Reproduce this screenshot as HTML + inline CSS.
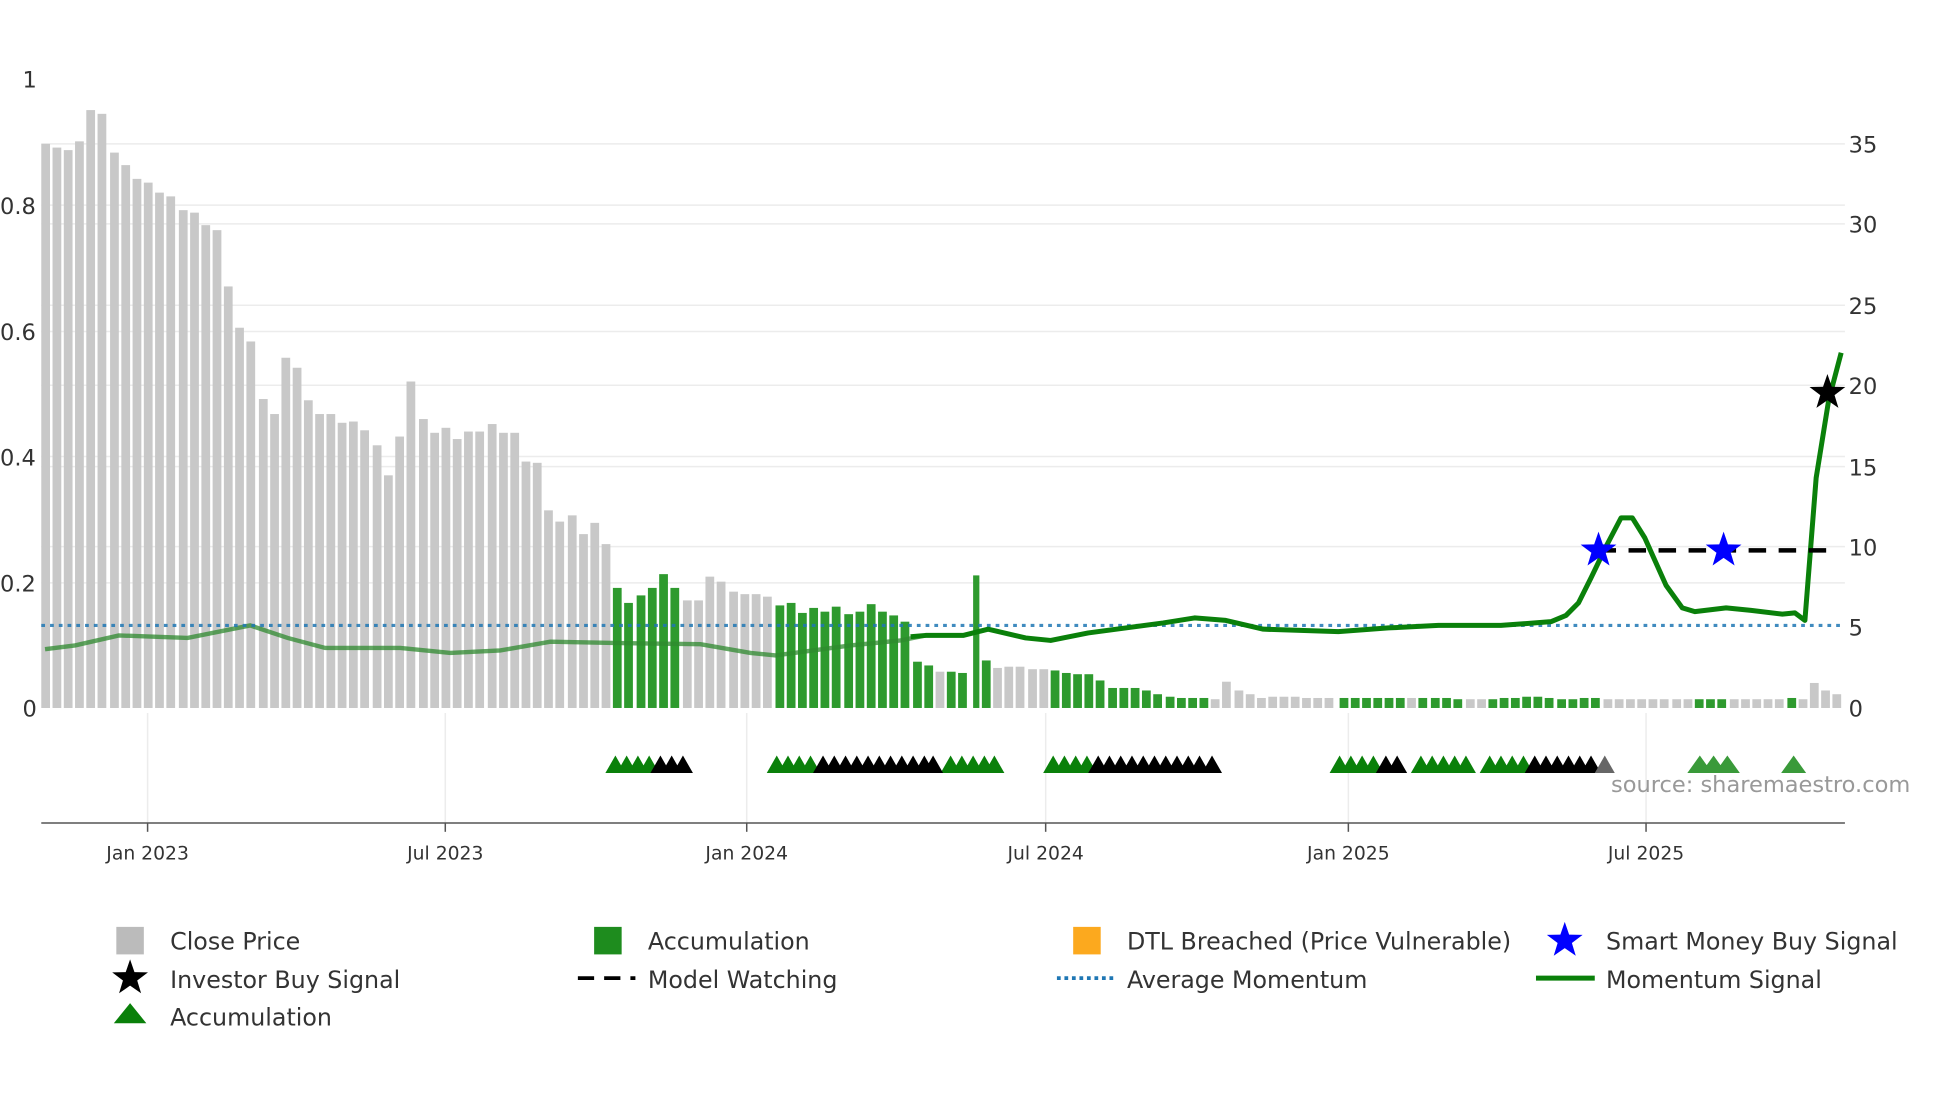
<!DOCTYPE html>
<html><head><meta charset="utf-8"><style>
html,body{margin:0;padding:0;background:#fff;}
svg{display:block;}
text{font-family:"DejaVu Sans","Liberation Sans",sans-serif;}
</style></head><body>
<svg width="1960" height="1102" viewBox="0 0 1567 881" preserveAspectRatio="none" xmlns="http://www.w3.org/2000/svg">
<rect width="1567" height="881" fill="#fff"/>
<g stroke="#ececec" stroke-width="1.2">
<line x1="33" y1="115" x2="1475" y2="115"/><line x1="33" y1="179" x2="1475" y2="179"/><line x1="33" y1="244" x2="1475" y2="244"/><line x1="33" y1="308" x2="1475" y2="308"/><line x1="33" y1="373" x2="1475" y2="373"/><line x1="33" y1="437" x2="1475" y2="437"/>
<line x1="33" y1="164" x2="1475" y2="164"/><line x1="33" y1="265" x2="1475" y2="265"/><line x1="33" y1="365" x2="1475" y2="365"/><line x1="33" y1="466" x2="1475" y2="466"/>
<line x1="118" y1="570" x2="118" y2="658"/><line x1="356" y1="570" x2="356" y2="658"/><line x1="597" y1="570" x2="597" y2="658"/><line x1="836" y1="570" x2="836" y2="658"/><line x1="1078" y1="570" x2="1078" y2="658"/><line x1="1316" y1="570" x2="1316" y2="658"/>
</g>
<g font-size="18" fill="#333">
<text x="18" y="70">1</text><text x="0" y="171">0.8</text><text x="0" y="272">0.6</text><text x="0" y="372">0.4</text><text x="0" y="473">0.2</text><text x="18" y="573">0</text>
<text x="1478" y="122">35</text><text x="1478" y="186">30</text><text x="1478" y="251">25</text><text x="1478" y="315">20</text><text x="1478" y="380">15</text><text x="1478" y="444">10</text><text x="1478" y="508">5</text><text x="1478" y="573">0</text>
</g>
<g fill="#c8c8c8">
<rect x="33" y="115" width="7" height="451"/><rect x="42" y="118" width="7" height="448"/><rect x="51" y="120" width="7" height="446"/><rect x="60" y="113" width="7" height="453"/><rect x="69" y="88" width="7" height="478"/><rect x="78" y="91" width="7" height="475"/><rect x="88" y="122" width="7" height="444"/><rect x="97" y="132" width="7" height="434"/><rect x="106" y="143" width="7" height="423"/><rect x="115" y="146" width="7" height="420"/><rect x="124" y="154" width="7" height="412"/><rect x="133" y="157" width="7" height="409"/><rect x="143" y="168" width="7" height="398"/><rect x="152" y="170" width="7" height="396"/><rect x="161" y="180" width="7" height="386"/><rect x="170" y="184" width="7" height="382"/><rect x="179" y="229" width="7" height="337"/><rect x="188" y="262" width="7" height="304"/><rect x="197" y="273" width="7" height="293"/><rect x="207" y="319" width="7" height="247"/><rect x="216" y="331" width="7" height="235"/><rect x="225" y="286" width="7" height="280"/><rect x="234" y="294" width="7" height="272"/><rect x="243" y="320" width="7" height="246"/><rect x="252" y="331" width="7" height="235"/><rect x="261" y="331" width="7" height="235"/><rect x="270" y="338" width="7" height="228"/><rect x="279" y="337" width="7" height="229"/><rect x="288" y="344" width="7" height="222"/><rect x="298" y="356" width="7" height="210"/><rect x="307" y="380" width="7" height="186"/><rect x="316" y="349" width="7" height="217"/><rect x="325" y="305" width="7" height="261"/><rect x="335" y="335" width="7" height="231"/><rect x="344" y="346" width="7" height="220"/><rect x="353" y="342" width="7" height="224"/><rect x="362" y="351" width="7" height="215"/><rect x="371" y="345" width="7" height="221"/><rect x="380" y="345" width="7" height="221"/><rect x="390" y="339" width="7" height="227"/><rect x="399" y="346" width="7" height="220"/><rect x="408" y="346" width="7" height="220"/><rect x="417" y="369" width="7" height="197"/><rect x="426" y="370" width="7" height="196"/><rect x="435" y="408" width="7" height="158"/><rect x="444" y="417" width="7" height="149"/><rect x="454" y="412" width="7" height="154"/><rect x="463" y="427" width="7" height="139"/><rect x="472" y="418" width="7" height="148"/><rect x="481" y="435" width="7" height="131"/>
<rect x="546" y="480" width="7" height="86"/><rect x="555" y="480" width="7" height="86"/><rect x="564" y="461" width="7" height="105"/><rect x="573" y="465" width="7" height="101"/><rect x="583" y="473" width="7" height="93"/><rect x="592" y="475" width="7" height="91"/><rect x="601" y="475" width="7" height="91"/><rect x="610" y="477" width="7" height="89"/>
<rect x="748" y="537" width="7" height="29"/>
<rect x="794" y="534" width="7" height="32"/><rect x="803" y="533" width="7" height="33"/><rect x="812" y="533" width="7" height="33"/><rect x="822" y="535" width="7" height="31"/><rect x="831" y="535" width="7" height="31"/>
<rect x="968" y="559" width="7" height="7"/><rect x="977" y="545" width="7" height="21"/><rect x="987" y="552" width="7" height="14"/><rect x="996" y="555" width="7" height="11"/><rect x="1005" y="558" width="7" height="8"/><rect x="1014" y="557" width="7" height="9"/><rect x="1023" y="557" width="7" height="9"/><rect x="1032" y="557" width="7" height="9"/><rect x="1041" y="558" width="7" height="8"/><rect x="1050" y="558" width="7" height="8"/><rect x="1059" y="558" width="7" height="8"/>
<rect x="1125" y="558" width="7" height="8"/><rect x="1172" y="559" width="7" height="7"/><rect x="1181" y="559" width="7" height="7"/>
<rect x="1282" y="559" width="7" height="7"/><rect x="1291" y="559" width="7" height="7"/><rect x="1300" y="559" width="7" height="7"/><rect x="1309" y="559" width="7" height="7"/><rect x="1318" y="559" width="7" height="7"/><rect x="1327" y="559" width="7" height="7"/><rect x="1337" y="559" width="7" height="7"/><rect x="1346" y="559" width="7" height="7"/>
<rect x="1383" y="559" width="7" height="7"/><rect x="1392" y="559" width="7" height="7"/><rect x="1401" y="559" width="7" height="7"/><rect x="1410" y="559" width="7" height="7"/><rect x="1419" y="559" width="7" height="7"/><rect x="1438" y="559" width="7" height="7"/><rect x="1447" y="546" width="7" height="20"/><rect x="1456" y="552" width="7" height="14"/><rect x="1465" y="555" width="7" height="11"/>
</g>
<g fill="#2e9a2e">
<rect x="490" y="470" width="7" height="96"/><rect x="499" y="482" width="7" height="84"/><rect x="509" y="476" width="7" height="90"/><rect x="518" y="470" width="7" height="96"/><rect x="527" y="459" width="7" height="107"/><rect x="536" y="470" width="7" height="96"/>
<rect x="620" y="484" width="7" height="82"/><rect x="629" y="482" width="7" height="84"/><rect x="638" y="490" width="7" height="76"/><rect x="647" y="486" width="7" height="80"/><rect x="656" y="489" width="7" height="77"/><rect x="665" y="485" width="7" height="81"/><rect x="675" y="491" width="7" height="75"/><rect x="684" y="489" width="7" height="77"/><rect x="693" y="483" width="7" height="83"/><rect x="702" y="489" width="7" height="77"/><rect x="711" y="492" width="7" height="74"/><rect x="720" y="497" width="7" height="69"/><rect x="730" y="529" width="7" height="37"/><rect x="739" y="532" width="7" height="34"/>
<rect x="757" y="537" width="7" height="29"/><rect x="766" y="538" width="7" height="28"/><rect x="778" y="460" width="5" height="106"/><rect x="785" y="528" width="7" height="38"/>
<rect x="840" y="536" width="7" height="30"/><rect x="849" y="538" width="7" height="28"/><rect x="858" y="539" width="7" height="27"/><rect x="867" y="539" width="7" height="27"/><rect x="876" y="544" width="7" height="22"/><rect x="886" y="550" width="7" height="16"/><rect x="895" y="550" width="7" height="16"/><rect x="904" y="550" width="7" height="16"/><rect x="913" y="552" width="7" height="14"/><rect x="922" y="555" width="7" height="11"/><rect x="932" y="557" width="7" height="9"/><rect x="941" y="558" width="7" height="8"/><rect x="950" y="558" width="7" height="8"/><rect x="959" y="558" width="7" height="8"/>
<rect x="1071" y="558" width="7" height="8"/><rect x="1080" y="558" width="7" height="8"/><rect x="1089" y="558" width="7" height="8"/><rect x="1098" y="558" width="7" height="8"/><rect x="1107" y="558" width="7" height="8"/><rect x="1116" y="558" width="7" height="8"/><rect x="1134" y="558" width="7" height="8"/><rect x="1144" y="558" width="7" height="8"/><rect x="1153" y="558" width="7" height="8"/><rect x="1162" y="559" width="7" height="7"/>
<rect x="1190" y="559" width="7" height="7"/><rect x="1199" y="558" width="7" height="8"/><rect x="1208" y="558" width="7" height="8"/><rect x="1217" y="557" width="7" height="9"/><rect x="1226" y="557" width="7" height="9"/><rect x="1235" y="558" width="7" height="8"/><rect x="1245" y="559" width="7" height="7"/><rect x="1254" y="559" width="7" height="7"/><rect x="1263" y="558" width="7" height="8"/><rect x="1272" y="558" width="7" height="8"/>
<rect x="1355" y="559" width="7" height="7"/><rect x="1364" y="559" width="7" height="7"/><rect x="1373" y="559" width="7" height="7"/><rect x="1429" y="558" width="7" height="8"/>
</g>
<path d="M36,519 L60,516 L95,508 L150,510 L200,500 L230,510 L260,518 L320,518 L360,522 L400,520 L440,513 L490,514 L560,515 L600,522 L620,524 L650,520 L680,516 L720,512 L740,508" fill="none" stroke="#2f8a2f" stroke-width="3.5" stroke-opacity="0.75"/>
<line x1="33" y1="500" x2="1472" y2="500" stroke="#1f77b4" stroke-width="2.5" stroke-dasharray="3,4" stroke-opacity="0.85"/>
<path d="M728,509 L740,508 L770,508 L790,503 L820,510 L840,512 L870,506 L900,502 L930,498 L955,494 L980,496 L1010,503 L1070,505 L1110,502 L1150,500 L1200,500 L1240,497 L1252,492 L1262,482 L1272,462 L1285,435 L1296,414 L1305,414 L1315,430 L1332,468 L1345,486 L1355,489 L1380,486 L1400,488 L1425,491 L1435,490 L1443,496 L1452,382 L1462,320 L1472,282" fill="none" stroke="#0a800a" stroke-width="4" stroke-linejoin="round"/>
<line x1="1278" y1="440" x2="1468" y2="440" stroke="#000" stroke-width="3.5" stroke-dasharray="14,10"/>
<path d="M0,-15 L3.5,-4.8 L14.3,-4.6 L5.7,1.9 L8.8,12.1 L0,6 L-8.8,12.1 L-5.7,1.9 L-14.3,-4.6 L-3.5,-4.8Z" fill="#0000ff" transform="translate(1278,440)"/>
<path d="M0,-15 L3.5,-4.8 L14.3,-4.6 L5.7,1.9 L8.8,12.1 L0,6 L-8.8,12.1 L-5.7,1.9 L-14.3,-4.6 L-3.5,-4.8Z" fill="#0000ff" transform="translate(1378,440)"/>
<path d="M0,-15 L3.5,-4.8 L14.3,-4.6 L5.7,1.9 L8.8,12.1 L0,6 L-8.8,12.1 L-5.7,1.9 L-14.3,-4.6 L-3.5,-4.8Z" fill="#000" transform="translate(1461,314)"/>
<g fill="#0a800a">
<path d="M484,618 l8,-14 l8,14z M493,618 l8,-14 l8,14z M502,618 l8,-14 l8,14z M511,618 l8,-14 l8,14z"/>
<path d="M613,618 l8,-14 l8,14z M622,618 l8,-14 l8,14z M631,618 l8,-14 l8,14z M640,618 l8,-14 l8,14z"/>
<path d="M752,618 l8,-14 l8,14z M761,618 l8,-14 l8,14z M770,618 l8,-14 l8,14z M779,618 l8,-14 l8,14z M787,618 l8,-14 l8,14z"/>
<path d="M834,618 l8,-14 l8,14z M843,618 l8,-14 l8,14z M852,618 l8,-14 l8,14z M861,618 l8,-14 l8,14z"/>
<path d="M1063,618 l8,-14 l8,14z M1072,618 l8,-14 l8,14z M1081,618 l8,-14 l8,14z M1090,618 l8,-14 l8,14z"/>
<path d="M1128,618 l8,-14 l8,14z M1137,618 l8,-14 l8,14z M1146,618 l8,-14 l8,14z M1155,618 l8,-14 l8,14z M1164,618 l8,-14 l8,14z"/>
<path d="M1183,618 l8,-14 l8,14z M1192,618 l8,-14 l8,14z M1201,618 l8,-14 l8,14z M1210,618 l8,-14 l8,14z"/>
</g>
<g fill="#3a9a3a">
<path d="M1349,618 l10,-14 l10,14z M1360,618 l10,-14 l10,14z M1371,618 l10,-14 l10,14z M1424,618 l10,-14 l10,14z"/>
</g>
<g fill="#000">
<path d="M520,618 l8,-14 l8,14z M529,618 l8,-14 l8,14z M538,618 l8,-14 l8,14z"/>
<path d="M650,618 l8,-14 l8,14z M659,618 l8,-14 l8,14z M668,618 l8,-14 l8,14z M677,618 l8,-14 l8,14z M686,618 l8,-14 l8,14z M695,618 l8,-14 l8,14z M704,618 l8,-14 l8,14z M713,618 l8,-14 l8,14z M722,618 l8,-14 l8,14z M731,618 l8,-14 l8,14z M738,618 l8,-14 l8,14z"/>
<path d="M870,618 l8,-14 l8,14z M879,618 l8,-14 l8,14z M888,618 l8,-14 l8,14z M897,618 l8,-14 l8,14z M906,618 l8,-14 l8,14z M915,618 l8,-14 l8,14z M924,618 l8,-14 l8,14z M933,618 l8,-14 l8,14z M942,618 l8,-14 l8,14z M951,618 l8,-14 l8,14z M961,618 l8,-14 l8,14z"/>
<path d="M1100,618 l8,-14 l8,14z M1109,618 l8,-14 l8,14z"/>
<path d="M1219,618 l8,-14 l8,14z M1228,618 l8,-14 l8,14z M1237,618 l8,-14 l8,14z M1246,618 l8,-14 l8,14z M1255,618 l8,-14 l8,14z M1264,618 l8,-14 l8,14z"/>
</g>
<path d="M1275,618 l8,-14 l8,14z" fill="#666"/>
<text x="1288" y="633" font-size="18" fill="#999">source: sharemaestro.com</text>
<line x1="33" y1="658" x2="1475" y2="658" stroke="#555" stroke-width="1.2"/>
<g stroke="#555" stroke-width="1.2"><line x1="118" y1="658" x2="118" y2="665"/><line x1="356" y1="658" x2="356" y2="665"/><line x1="597" y1="658" x2="597" y2="665"/><line x1="836" y1="658" x2="836" y2="665"/><line x1="1078" y1="658" x2="1078" y2="665"/><line x1="1316" y1="658" x2="1316" y2="665"/></g>
<g font-size="15" fill="#333" text-anchor="middle">
<text x="118" y="687">Jan 2023</text><text x="356" y="687">Jul 2023</text><text x="597" y="687">Jan 2024</text><text x="836" y="687">Jul 2024</text><text x="1078" y="687">Jan 2025</text><text x="1316" y="687">Jul 2025</text>
</g>
<g font-size="19" fill="#333">
<rect x="93" y="741" width="22" height="22" fill="#bbb"/><text x="136" y="759">Close Price</text>
<rect x="475" y="741" width="22" height="22" fill="#1e8c1e"/><text x="518" y="759">Accumulation</text>
<rect x="858" y="741" width="22" height="22" fill="#fca91e"/><text x="901" y="759">DTL Breached (Price Vulnerable)</text>
<path d="M0,-15 L3.5,-4.8 L14.3,-4.6 L5.7,1.9 L8.8,12.1 L0,6 L-8.8,12.1 L-5.7,1.9 L-14.3,-4.6 L-3.5,-4.8Z" fill="#0000ff" transform="translate(1251,752)"/><text x="1284" y="759">Smart Money Buy Signal</text>
<path d="M0,-15 L3.5,-4.8 L14.3,-4.6 L5.7,1.9 L8.8,12.1 L0,6 L-8.8,12.1 L-5.7,1.9 L-14.3,-4.6 L-3.5,-4.8Z" fill="#000" transform="translate(104,782)"/><text x="136" y="790">Investor Buy Signal</text>
<line x1="462" y1="782" x2="508" y2="782" stroke="#000" stroke-width="3" stroke-dasharray="13,8"/><text x="518" y="790">Model Watching</text>
<line x1="845" y1="782" x2="890" y2="782" stroke="#1f77b4" stroke-width="3" stroke-dasharray="3,3"/><text x="901" y="790">Average Momentum</text>
<line x1="1228" y1="782" x2="1275" y2="782" stroke="#0a800a" stroke-width="4"/><text x="1284" y="790">Momentum Signal</text>
<path d="M91,818 l13,-16 l13,16z" fill="#0a800a"/><text x="136" y="820">Accumulation</text>
</g>
</svg>
</body></html>
